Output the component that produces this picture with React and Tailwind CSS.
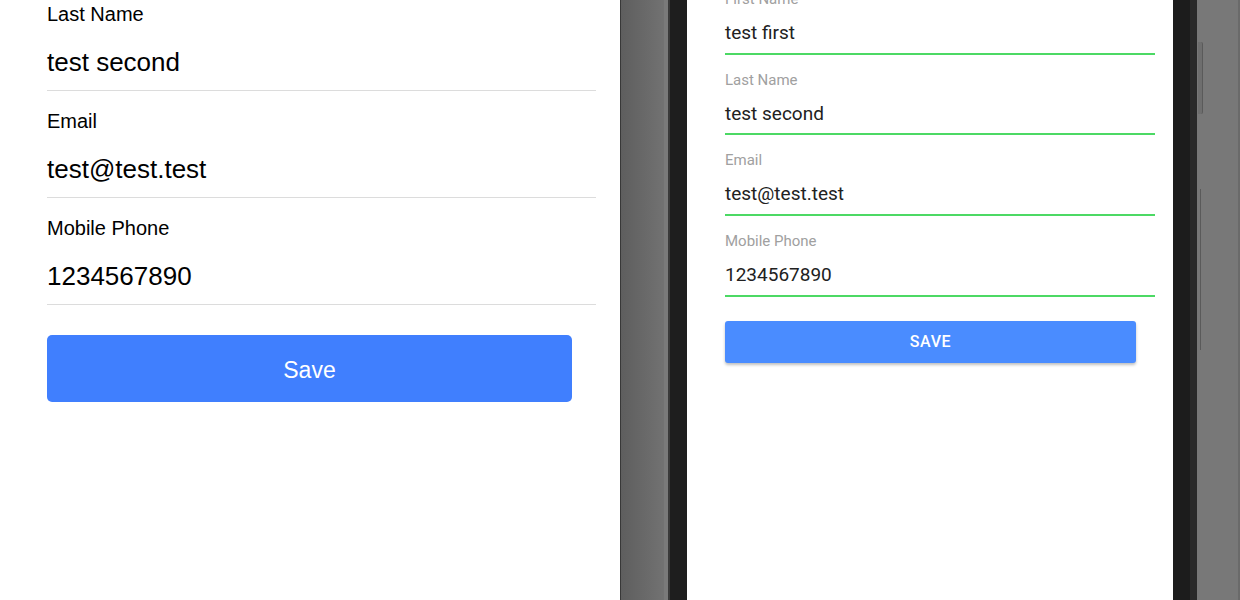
const IOS_FIELDS = [
  { label: 'Last Name', value: 'test second' },
  { label: 'Email', value: 'test@test.test' },
  { label: 'Mobile Phone', value: '1234567890' },
];

const ANDROID_FIELDS = [
  { label: 'First Name', value: 'test first' },
  { label: 'Last Name', value: 'test second' },
  { label: 'Email', value: 'test@test.test' },
  { label: 'Mobile Phone', value: '1234567890' },
];

function IosForm() {
  return (
    <div className="w-[620px] shrink-0 overflow-hidden bg-white pl-[47px] pr-[24px] font-['Liberation_Sans',Arial,sans-serif] text-black">
      <div className="-mt-[16px]">
        {IOS_FIELDS.map((f) => (
          <div key={f.label} className="border-b border-[#dcdcdc] pt-[18px] pb-[12px]">
            <div className="text-[20px] leading-[24px]">{f.label}</div>
            <div className="mt-[20px] text-[26px] leading-[32px]">{f.value}</div>
          </div>
        ))}
      </div>
      <button className="mt-[30px] flex h-[67px] w-[525px] items-center justify-center rounded-[5px] bg-[#407ffe] pt-[3px] text-[23px] text-white">
        Save
      </button>
    </div>
  );
}

function AndroidForm() {
  return (
    <div className="w-[486px] shrink-0 overflow-hidden bg-white pl-[38px] pr-[18px] font-['Roboto',sans-serif]">
      <div className="-mt-[26px]">
        {ANDROID_FIELDS.map((f) => (
          <div key={f.label} className="border-b-2 border-[#4cd964] pt-[17px] pb-[7.67px]">
            <div className="text-[15px] leading-[16px] text-[#a0a0a0]">{f.label}</div>
            <div className="mt-[14px] text-[19px] leading-[24px] text-[#212121]">{f.value}</div>
          </div>
        ))}
      </div>
      <button className="mt-[24px] flex h-[42px] w-[411px] items-center justify-center rounded-[3px] bg-[#4a8cff] text-[16px] font-medium tracking-[0.6px] text-white shadow-[0_2px_3px_rgba(0,0,0,0.25)]">
        SAVE
      </button>
    </div>
  );
}

export default function App() {
  return (
    <div className="flex h-[600px] w-[1240px] overflow-hidden bg-white">
      <IosForm />

      {/* emulator frame, left edge */}
      <div className="w-px bg-[#383838]" />
      <div className="w-[43px] bg-gradient-to-r from-[#5e5e5e] to-[#727272]" />
      <div className="w-[4px] bg-[#7a7a7a]" />
      <div className="w-[2px] bg-[#3a3a3a]" />
      <div className="w-[17px] bg-[#1e1e1e]" />

      <AndroidForm />

      {/* emulator frame, right edge */}
      <div className="w-[17px] bg-[#1c1c1c]" />
      <div className="w-[7px] bg-[#2a2a2a]" />
      <div className="relative w-[43px] bg-[#787878]">
        <div className="absolute left-[1px] top-[42px] h-[72px] w-[5px] rounded-r-[2px] border-r border-[#5a5a5a] bg-[#6e6e6e]" />
        <div className="absolute left-[3px] top-[189px] h-[161px] w-px bg-[#5a5a5a]" />
        <div className="absolute right-0 top-0 h-full w-[2px] bg-[#6a6a6a]" />
      </div>
    </div>
  );
}
